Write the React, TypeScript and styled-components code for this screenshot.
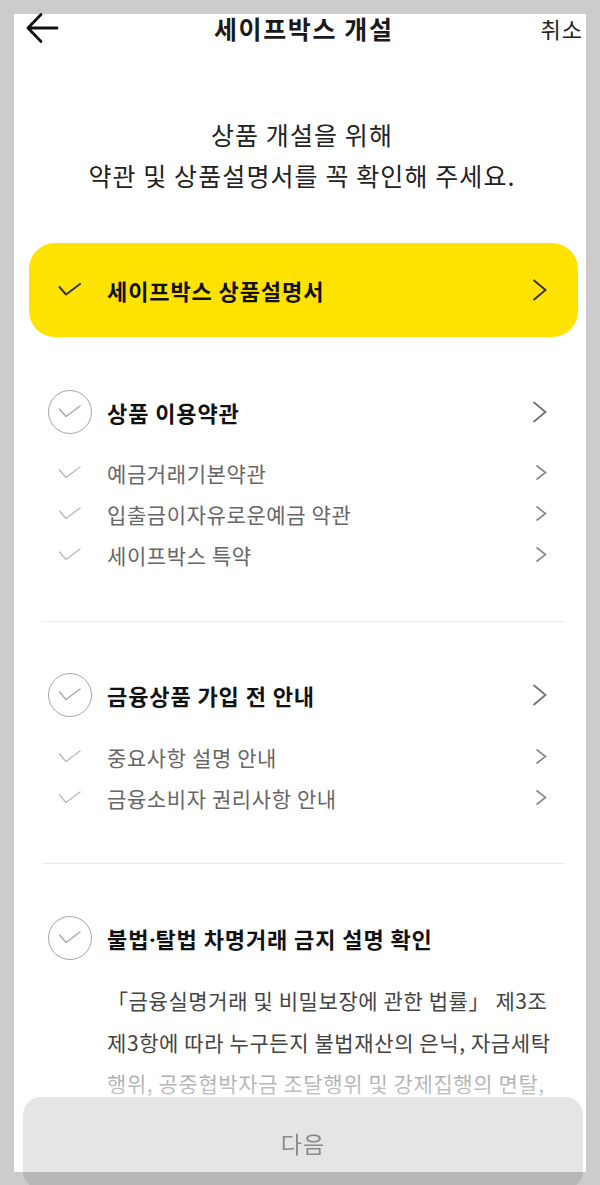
import React from "react";
import styled, { createGlobalStyle } from "styled-components";

const GlobalStyle = createGlobalStyle`
  html, body {
    margin: 0;
    padding: 0;
    background: #cccccc;
  }
  body {
    font-family: "Noto Sans CJK KR", "Noto Sans", sans-serif;
    color: #111;
  }
  * { box-sizing: border-box; }
`;

const Panel = styled.div`
  margin: 14px 14px 0;
  height: 1158px;
  background: #ffffff;
`;

const Header = styled.header`
  height: 28px;
  display: flex;
  align-items: center;
  padding: 0 4px 0 11px;
`;

const BackButton = styled.button`
  width: 34px;
  height: 32px;
  padding: 0;
  border: 0;
  background: none;
  display: flex;
  align-items: center;
  justify-content: flex-start;
`;

const Title = styled.h1`
  flex: 1;
  margin: 0;
  padding-left: 8px;
  text-align: center;
  font-size: 25px;
  font-weight: 700;
  line-height: 28px;
  color: #1a1a1a;
  letter-spacing: 1.6px;
`;

const Cancel = styled.span`
  font-size: 22px;
  line-height: 28px;
  color: #222;
  letter-spacing: 1px;
  margin-right: -1px;
`;

const Intro = styled.p`
  margin: 72px 0 0;
  padding-left: 4px;
  text-align: center;
  font-size: 25px;
  line-height: 41px;
  color: #222;
  letter-spacing: 1.1px;
`;

const HighlightCard = styled.div`
  margin: 47px 8px 0 15px;
  height: 94px;
  border-radius: 26px;
  background: #ffe300;
  display: flex;
  align-items: center;
  padding: 0 31px 0 18px;
`;

const IconSlot = styled.span`
  width: 46px;
  flex: none;
  display: flex;
  align-items: center;
  justify-content: center;
`;

const Label = styled.span<{ $strong?: boolean }>`
  flex: 1;
  margin-left: 14px;
  font-size: ${({ $strong }) => ($strong ? "22px" : "21px")};
  font-weight: ${({ $strong }) => ($strong ? 700 : 400)};
  color: ${({ $strong }) => ($strong ? "#111" : "#666")};
  letter-spacing: ${({ $strong }) => ($strong ? "0.9px" : "0.6px")};
`;

// narrow latin middle dot instead of the full-width CJK one
const Dot = styled.span`
  font-family: "Noto Sans", sans-serif;
  letter-spacing: 0;
`;

const Section = styled.section<{ $top: number }>`
  margin-top: ${({ $top }) => $top}px;
  padding: 0 39px 0 33px;
`;

const HeadRow = styled.div`
  height: 44px;
  display: flex;
  align-items: center;
`;

const Circle = styled.span`
  width: 44px;
  height: 44px;
  border-radius: 50%;
  border: 1.5px solid #a6a6a6;
  display: flex;
  align-items: center;
  justify-content: center;
`;

const ItemList = styled.ul<{ $top: number }>`
  list-style: none;
  margin: ${({ $top }) => $top}px 0 0;
  padding: 0;
`;

const ItemRow = styled.li`
  height: 41px;
  display: flex;
  align-items: center;
`;

const Divider = styled.hr<{ $top: number }>`
  margin: ${({ $top }) => $top}px 21px 0 28px;
  border: 0;
  border-top: 1px solid #ececec;
  height: 0;
`;

const Notice = styled.p`
  margin: 20px 0 0 60px;
  font-size: 21px;
  line-height: 41.5px;
  color: #444;
  white-space: nowrap;
  letter-spacing: 0.6px;
`;

const Fade = styled.div`
  position: fixed;
  left: 14px;
  right: 14px;
  top: 1058px;
  height: 40px;
  background: linear-gradient(
    rgba(255, 255, 255, 0) 0%,
    rgba(255, 255, 255, 0.55) 35%,
    rgba(255, 255, 255, 0.7) 100%
  );
`;

const NextButton = styled.button`
  position: fixed;
  left: 23px;
  right: 17px;
  top: 1097px;
  height: 92px;
  border: 0;
  border-radius: 18px;
  background: rgba(0, 0, 0, 0.1);
  padding: 0;
  font-family: "Noto Sans CJK KR", "Noto Sans", sans-serif;
  font-size: 23px;
  line-height: 46px;
  letter-spacing: 1px;
  color: #8a8a8a;
`;

type CheckTone = "dark" | "mid" | "light";

const checkColor: Record<CheckTone, string> = {
  dark: "#333",
  mid: "#aaa",
  light: "#bcbcbc",
};

const Check = ({ tone }: { tone: CheckTone }) => (
  <svg width="24" height="14" viewBox="0 0 24 14" fill="none">
    <path
      d="M1.5 4 L8 11.5 L22 1"
      stroke={checkColor[tone]}
      strokeWidth={tone === "dark" ? 2 : 1.5}
      strokeLinecap="round"
      strokeLinejoin="round"
    />
  </svg>
);

const Chevron = ({ small, color }: { small?: boolean; color: string }) =>
  small ? (
    <svg width="12" height="17" viewBox="0 0 12 17" fill="none">
      <path d="M1.5 1.5 L10.5 8.5 L1.5 15.5" stroke={color} strokeWidth="1.6" />
    </svg>
  ) : (
    <svg width="15" height="22" viewBox="0 0 15 22" fill="none">
      <path d="M1.5 1 L13.5 11 L1.5 21" stroke={color} strokeWidth="1.9" />
    </svg>
  );

const ArrowLeft = () => (
  <svg width="34" height="32" viewBox="0 0 34 32" fill="none">
    <path
      d="M32 16 H3 M16 2.5 L3 16 L16 29.5"
      stroke="#111"
      strokeWidth="2.8"
      strokeLinecap="round"
      strokeLinejoin="round"
    />
  </svg>
);

interface Group {
  title: string;
  items: string[];
}

const groups: Group[] = [
  {
    title: "상품 이용약관",
    items: ["예금거래기본약관", "입출금이자유로운예금 약관", "세이프박스 특약"],
  },
  {
    title: "금융상품 가입 전 안내",
    items: ["중요사항 설명 안내", "금융소비자 권리사항 안내"],
  },
];

const groupSpacing = [
  { top: 53, list: 18, divider: 46 },
  { top: 51, list: 19, divider: 45 },
];

export default function App() {
  return (
    <>
      <GlobalStyle />
      <Panel>
        <Header>
          <BackButton aria-label="뒤로">
            <ArrowLeft />
          </BackButton>
          <Title>세이프박스 개설</Title>
          <Cancel>취소</Cancel>
        </Header>

        <Intro>
          상품 개설을 위해
          <br />
          약관 및 상품설명서를 꼭 확인해 주세요.
        </Intro>

        <HighlightCard>
          <IconSlot>
            <Check tone="dark" />
          </IconSlot>
          <Label $strong>세이프박스 상품설명서</Label>
          <Chevron color="#333" />
        </HighlightCard>

        {groups.map((group, i) => (
          <React.Fragment key={group.title}>
            <Section $top={groupSpacing[i].top}>
              <HeadRow>
                <IconSlot>
                  <Circle>
                    <Check tone="mid" />
                  </Circle>
                </IconSlot>
                <Label $strong>{group.title}</Label>
                <Chevron color="#777" />
              </HeadRow>
              <ItemList $top={groupSpacing[i].list}>
                {group.items.map((item) => (
                  <ItemRow key={item}>
                    <IconSlot>
                      <Check tone="light" />
                    </IconSlot>
                    <Label>{item}</Label>
                    <Chevron small color="#888" />
                  </ItemRow>
                ))}
              </ItemList>
            </Section>
            <Divider $top={groupSpacing[i].divider} />
          </React.Fragment>
        ))}

        <Section $top={52}>
          <HeadRow>
            <IconSlot>
              <Circle>
                <Check tone="mid" />
              </Circle>
            </IconSlot>
            <Label $strong>
              불법<Dot>·</Dot>탈법 차명거래 금지 설명 확인
            </Label>
          </HeadRow>
          <Notice>
            「금융실명거래 및 비밀보장에 관한 법률」 제3조
            <br />
            제3항에 따라 누구든지 불법재산의 은닉, 자금세탁
            <br />
            행위, 공중협박자금 조달행위 및 강제집행의 면탈,
          </Notice>
        </Section>
      </Panel>
      <Fade />
      <NextButton>다음</NextButton>
    </>
  );
}
